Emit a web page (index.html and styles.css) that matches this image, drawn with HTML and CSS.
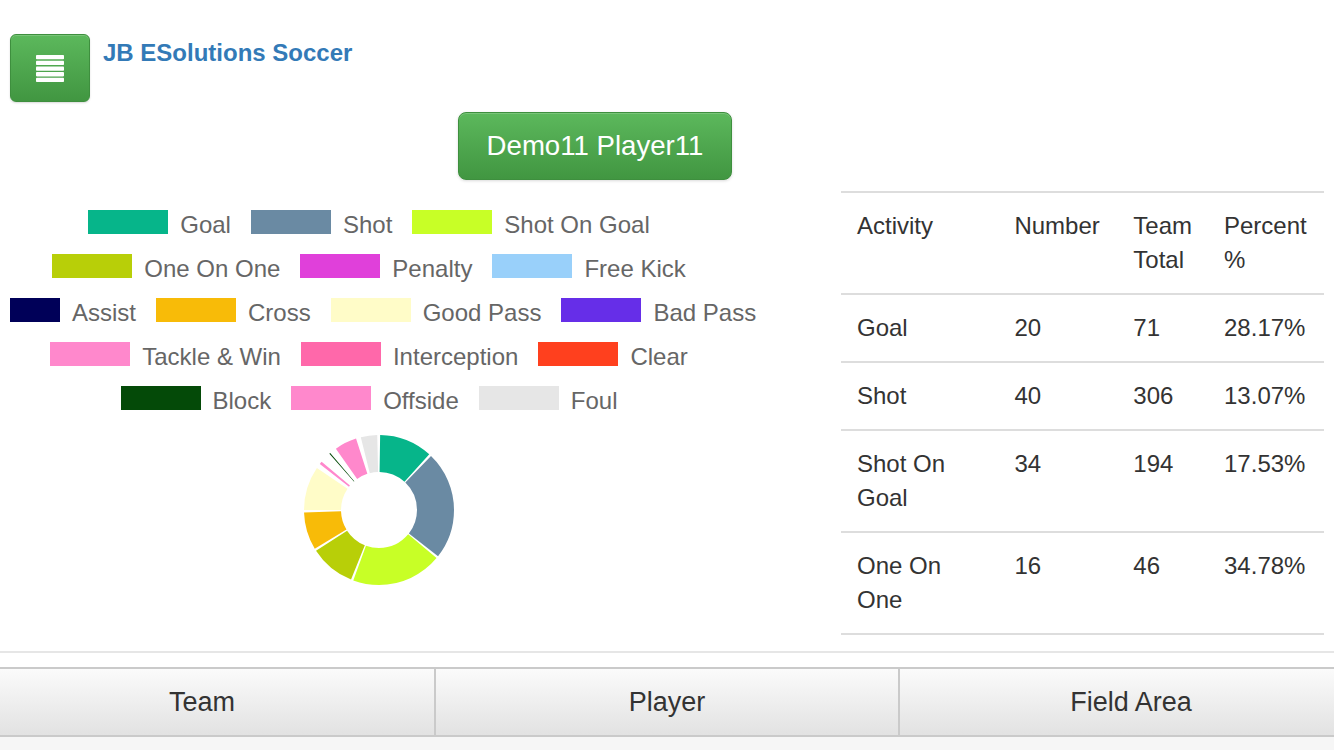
FILE: index.html
```html
<!DOCTYPE html>
<html lang="en">
<head>
<meta charset="utf-8">
<title>JB ESolutions Soccer</title>
<link rel="stylesheet" href="styles.css">
</head>
<body>
<div class="page">
  <header class="header">
    <button class="menu-btn" aria-label="Menu">
      <svg class="menu-icon" width="28" height="27" viewBox="0 0 28 27">
        <rect x="0" y="0" width="28" height="4.3" rx="0.8" fill="#fff"/>
        <rect x="0" y="5.7" width="28" height="4.3" rx="0.8" fill="#fff"/>
        <rect x="0" y="11.4" width="28" height="4.3" rx="0.8" fill="#fff"/>
        <rect x="0" y="17.1" width="28" height="4.3" rx="0.8" fill="#fff"/>
        <rect x="0" y="22.7" width="28" height="4.3" rx="0.8" fill="#fff"/>
      </svg>
    </button>
    <h1 class="brand">JB ESolutions Soccer</h1>
  </header>

  <div class="player-bar">
    <button class="btn-player">Demo11 Player11</button>
  </div>

  <main class="content">
    <section class="chart-col">
      <div class="legend">
        <div class="legend-row">
          <span class="swatch c-goal"></span><span class="label">Goal</span>
          <span class="swatch c-shot"></span><span class="label">Shot</span>
          <span class="swatch c-sog"></span><span class="label">Shot On Goal</span>
        </div>
        <div class="legend-row">
          <span class="swatch c-one"></span><span class="label">One On One</span>
          <span class="swatch c-pen"></span><span class="label">Penalty</span>
          <span class="swatch c-fk"></span><span class="label">Free Kick</span>
        </div>
        <div class="legend-row legend-row-wide">
          <span class="swatch swatch-short c-assist"></span><span class="label">Assist</span>
          <span class="swatch c-cross"></span><span class="label">Cross</span>
          <span class="swatch c-good"></span><span class="label">Good Pass</span>
          <span class="swatch c-bad"></span><span class="label">Bad Pass</span>
        </div>
        <div class="legend-row">
          <span class="swatch c-tackle"></span><span class="label">Tackle &amp; Win</span>
          <span class="swatch c-inter"></span><span class="label">Interception</span>
          <span class="swatch c-clear"></span><span class="label">Clear</span>
        </div>
        <div class="legend-row">
          <span class="swatch c-block"></span><span class="label">Block</span>
          <span class="swatch c-offside"></span><span class="label">Offside</span>
          <span class="swatch c-foul"></span><span class="label">Foul</span>
        </div>
      </div>

      <svg class="donut" width="150" height="150" viewBox="0 0 150 150">
        <g transform="rotate(-90 75 75)" fill="none" stroke-width="37">
          <circle cx="75" cy="75" r="56.5" pathLength="360" stroke="#06b58a" stroke-dasharray="41.2 400" stroke-dashoffset="-0.9"/>
          <circle cx="75" cy="75" r="56.5" pathLength="360" stroke="#6a8aa3" stroke-dasharray="84.2 400" stroke-dashoffset="-43.9"/>
          <circle cx="75" cy="75" r="56.5" pathLength="360" stroke="#c8ff26" stroke-dasharray="70.2 400" stroke-dashoffset="-129.9"/>
          <circle cx="75" cy="75" r="56.5" pathLength="360" stroke="#b8cf08" stroke-dasharray="35.2 400" stroke-dashoffset="-201.9"/>
          <circle cx="75" cy="75" r="56.5" pathLength="360" stroke="#f8bb08" stroke-dasharray="29.2 400" stroke-dashoffset="-238.9"/>
          <circle cx="75" cy="75" r="56.5" pathLength="360" stroke="#fffcc8" stroke-dasharray="34.2 400" stroke-dashoffset="-269.9"/>
          <circle cx="75" cy="75" r="56.5" pathLength="360" stroke="#ff88cc" stroke-dasharray="2.2 400" stroke-dashoffset="-307.9"/>
          <circle cx="75" cy="75" r="56.5" pathLength="360" stroke="#044a08" stroke-dasharray="0.8 400" stroke-dashoffset="-318.6"/>
          <circle cx="75" cy="75" r="56.5" pathLength="360" stroke="#ff88cc" stroke-dasharray="17.2 400" stroke-dashoffset="-324.9"/>
          <circle cx="75" cy="75" r="56.5" pathLength="360" stroke="#e6e6e6" stroke-dasharray="12.7 400" stroke-dashoffset="-345.9"/>
        </g>
      </svg>
    </section>

    <table class="stats">
      <thead>
        <tr>
          <th class="col-activity">Activity</th>
          <th class="col-number">Number</th>
          <th class="col-team">Team Total</th>
          <th class="col-percent">Percent %</th>
        </tr>
      </thead>
      <tbody>
        <tr><td>Goal</td><td>20</td><td>71</td><td>28.17%</td></tr>
        <tr><td>Shot</td><td>40</td><td>306</td><td>13.07%</td></tr>
        <tr><td>Shot On Goal</td><td>34</td><td>194</td><td>17.53%</td></tr>
        <tr><td>One On One</td><td>16</td><td>46</td><td>34.78%</td></tr>
      </tbody>
    </table>
  </main>

  <hr class="divider">

  <nav class="tabs">
    <a class="tab tab-team">Team</a>
    <a class="tab tab-player">Player</a>
    <a class="tab tab-field">Field Area</a>
  </nav>
  <div class="bottom"></div>
</div>
</body>
</html>
```

FILE: styles.css
```css
html, body {
  margin: 0;
  padding: 0;
}

body {
  font-family: "Liberation Sans", Arial, Helvetica, sans-serif;
  background: #fff;
  width: 1334px;
  height: 750px;
  overflow: hidden;
}

.page {
  width: 1334px;
}

/* Header */
.header {
  display: flex;
  align-items: flex-start;
  padding: 34px 0 0 10px;
  height: 68px;
}

.menu-btn {
  width: 80px;
  height: 68px;
  padding: 0;
  border: 1px solid #3e8f3e;
  border-radius: 6px;
  background: linear-gradient(to bottom, #5cb85c 0%, #419641 100%);
  box-shadow: inset 0 1px 0 rgba(255, 255, 255, 0.18), 0 1px 2px rgba(0, 0, 0, 0.15);
  display: flex;
  align-items: center;
  justify-content: center;
  box-sizing: border-box;
}

.menu-icon {
  display: block;
}

.brand {
  margin: 7px 0 0 13px;
  font-size: 24px;
  line-height: 24px;
  font-weight: bold;
  color: #337ab7;
}

/* Player button */
.player-bar {
  padding: 10px 0 0 458px;
  height: 68px;
}

.btn-player {
  width: 274px;
  height: 68px;
  box-sizing: border-box;
  border: 1px solid #3e8f3e;
  border-radius: 8px;
  background: linear-gradient(to bottom, #5cb85c 0%, #419641 100%);
  box-shadow: inset 0 1px 0 rgba(255, 255, 255, 0.18), 0 1px 3px rgba(0, 0, 0, 0.15);
  color: #fff;
  font-family: inherit;
  font-size: 27.6px;
  line-height: 30px;
  padding: 0;
}

/* Main content */
.content {
  display: flex;
  align-items: flex-start;
  margin-top: 11px;
}

.chart-col {
  width: 758px;
  margin-right: 83px;
}

.legend {
  padding-top: 19px;
}

.legend-row {
  display: flex;
  justify-content: center;
  align-items: flex-start;
  height: 44px;
  white-space: nowrap;
}

.legend-row-wide {
  justify-content: flex-start;
  padding-left: 10px;
}

.swatch {
  width: 80px;
  height: 24px;
  flex: none;
}

.swatch-short {
  width: 50px;
}

.label {
  margin: 3px 20px 0 12px;
  font-size: 24px;
  line-height: 24px;
  color: #666;
}

.c-goal { background: #06b58a; }
.c-shot { background: #6a8aa3; }
.c-sog { background: #c8ff26; }
.c-one { background: #b8cf08; }
.c-pen { background: #e040da; }
.c-fk { background: #99d0fa; }
.c-assist { background: #000058; }
.c-cross { background: #f8bb08; }
.c-good { background: #fffcc8; }
.c-bad { background: #662ee8; }
.c-tackle { background: #ff88cc; }
.c-inter { background: #ff68aa; }
.c-clear { background: #ff401e; }
.c-block { background: #044a08; }
.c-offside { background: #ff88cc; }
.c-foul { background: #e6e6e6; }

.donut {
  display: block;
  margin: 5px 0 0 304px;
}

/* Table */
.stats {
  width: 483px;
  border-collapse: separate;
  border-spacing: 0;
  font-size: 24px;
  line-height: 34px;
  color: #333;
}

.stats th,
.stats td {
  text-align: left;
  vertical-align: top;
  font-weight: normal;
  padding: 16px 16px;
}

.stats th {
  border-top: 2px solid #ddd;
  border-bottom: 2px solid #ddd;
}

.stats tbody tr + tr td {
  border-top: 2px solid #ddd;
}

.stats tbody tr:last-child td {
  border-bottom: 2px solid #ddd;
}

.col-activity { width: 127px; }
.col-number { width: 87px; }
.col-team { width: 57px; }
.col-percent { width: 84px; }

/* Divider */
.divider {
  margin: 16px 0 0;
  border: 0;
  border-top: 2px solid #e6e6e6;
  height: 0;
}

/* Tabs */
.tabs {
  display: flex;
  margin-top: 14px;
  border-top: 2px solid #cacaca;
  border-bottom: 2px solid #cacaca;
  background: linear-gradient(to bottom, #fbfbfb 0%, #e2e2e2 100%);
  height: 66px;
}

.tab {
  display: flex;
  align-items: center;
  justify-content: center;
  font-size: 27px;
  color: #333;
  box-sizing: border-box;
}

.tab-team {
  width: 434px;
  padding-right: 30px;
}

.tab-player {
  width: 464px;
  border-left: 2px solid #cacaca;
}

.tab-field {
  width: 436px;
  border-left: 2px solid #cacaca;
  padding-left: 28px;
}

.bottom {
  height: 13px;
  background: #f6f6f6;
}
```
